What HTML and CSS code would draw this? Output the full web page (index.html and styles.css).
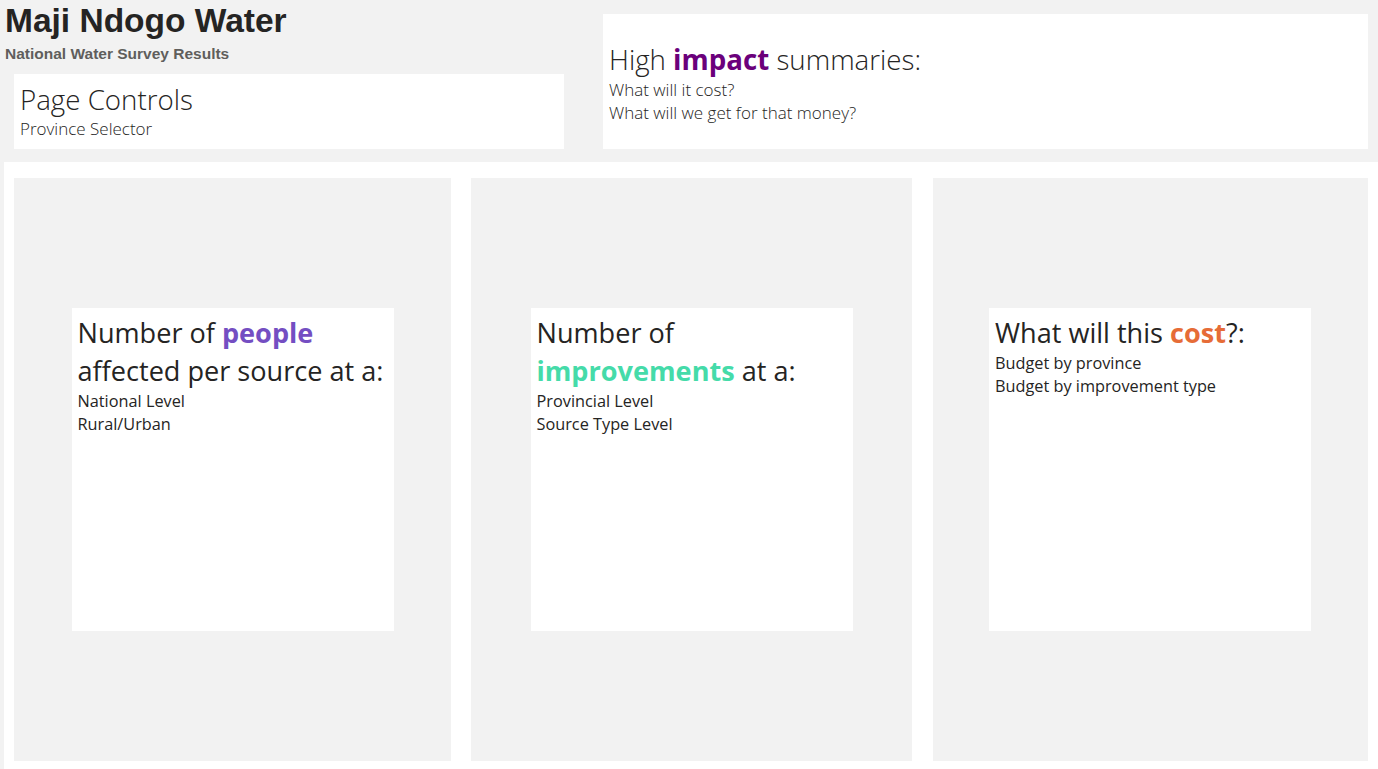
FILE: index.html
```html
<!DOCTYPE html>
<html lang="en">
<head>
<meta charset="utf-8">
<title>Maji Ndogo Water</title>
<link rel="stylesheet" href="styles.css">
</head>
<body>
<header class="header">
  <div class="header-left">
    <h1 class="title">Maji Ndogo Water</h1>
    <p class="subtitle">National Water Survey Results</p>
    <section class="controls">
      <h2 class="box-heading light">Page Controls</h2>
      <p class="box-line light">Province Selector</p>
    </section>
  </div>
  <section class="summary">
    <div>
      <h2 class="box-heading light">High <strong class="c-impact">impact</strong> summaries:</h2>
      <p class="box-line light">What will it cost?</p>
      <p class="box-line light">What will we get for that money?</p>
    </div>
  </section>
</header>
<main class="main">
  <div class="card card-1">
    <div class="note">
      <h2 class="box-heading">Number of <strong class="c-people">people</strong> affected per source at a:</h2>
      <p class="box-line">National Level</p>
      <p class="box-line">Rural/Urban</p>
    </div>
  </div>
  <div class="card card-2">
    <div class="note">
      <h2 class="box-heading">Number of <strong class="c-improve">improvements</strong> at a:</h2>
      <p class="box-line">Provincial Level</p>
      <p class="box-line">Source Type Level</p>
    </div>
  </div>
  <div class="card card-3">
    <div class="note">
      <h2 class="box-heading">What will this <strong class="c-cost">cost</strong>?:</h2>
      <p class="box-line">Budget by province</p>
      <p class="box-line">Budget by improvement type</p>
    </div>
  </div>
</main>
</body>
</html>
```
FILE: styles.css
```css
* { box-sizing: border-box; }
html, body {
  margin: 0;
  padding: 0;
}
body {
  width: 1378px;
  height: 769px;
  overflow: hidden;
  background: #f2f2f2;
  color: #252423;
  font-family: "Open Sans", "Noto Sans", sans-serif;
}
h1, h2, p { margin: 0; }

.header {
  height: 162px;
  display: flex;
  padding-left: 5px;
  padding-right: 10px;
}
.header-left {
  width: 559px;
  display: flex;
  flex-direction: column;
}
.title {
  font-family: "Liberation Sans", Arial, sans-serif;
  font-weight: 700;
  font-size: 33.5px;
  line-height: 36px;
  padding-top: 3px;
  color: #252423;
}
.subtitle {
  font-family: "Liberation Sans", Arial, sans-serif;
  font-weight: 700;
  font-size: 15.5px;
  line-height: 20px;
  margin-top: 5px;
  color: #605e5c;
}
.controls {
  margin-top: 10px;
  margin-left: 9px;
  width: 550px;
  height: 75px;
  background: #fff;
  padding: 8px 6px 0;
}
.summary {
  margin-left: 39px;
  margin-top: 14px;
  width: 765px;
  height: 135px;
  background: #fff;
  padding: 0 6px;
  display: flex;
  align-items: center;
}

.box-heading {
  font-size: 27.1px;
  line-height: 38px;
  font-weight: 400;
}
.box-heading strong { font-weight: 700; }
.box-line {
  font-size: 16.3px;
  line-height: 23px;
  font-weight: 400;
}
.box-heading.light {
  font-weight: 300;
  font-size: 27.7px;
}
.box-line.light {
  font-weight: 300;
  font-size: 17px;
  color: #252423;
}
.controls .box-heading { line-height: 34px; }
.controls .box-line { line-height: 26px; }
.c-impact { color: #6b007b; }
.c-people { color: #744ec2; }
.c-improve { color: #45dba9; }
.c-cost { color: #e66c37; }

.main {
  margin-left: 4px;
  height: 607px;
  background: #fff;
  padding: 16px 10px 8px;
  display: flex;
}
.card {
  height: 583px;
  background: #f2f2f2;
  display: flex;
  align-items: center;
  justify-content: center;
}
.card-1 { width: 437px; }
.card-2 { width: 441px; margin-left: 20px; }
.card-3 { width: 435px; margin-left: 21px; }
.note {
  width: 322px;
  height: 323px;
  background: #fff;
  padding: 6px 6px;
}
.card-3 .note { margin-left: -1px; }
```
